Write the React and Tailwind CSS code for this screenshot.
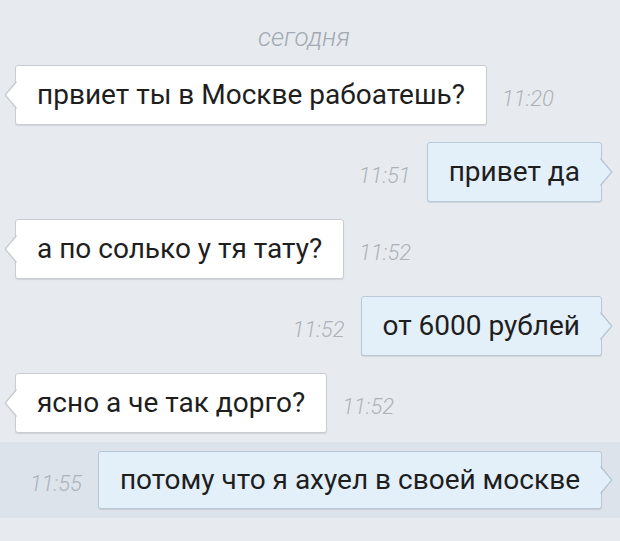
import React from "react";

function TailLeft() {
  return (
    <svg
      className="absolute left-[-12px] top-1/2 -translate-y-1/2"
      width="14"
      height="28"
      viewBox="0 0 14 28"
    >
      <path d="M13.5,0 L1,14 L13.5,28 Z" fill="#ffffff" />
      <path d="M12.5,0.5 L1.2,14 L12.5,27.5" fill="none" stroke="#c3c8ce" strokeWidth="1.2" />
    </svg>
  );
}

function TailRight() {
  return (
    <svg
      className="absolute right-[-12px] top-1/2 -translate-y-1/2"
      width="14"
      height="28"
      viewBox="0 0 14 28"
    >
      <path d="M0.5,0 L13,14 L0.5,28 Z" fill="#e3f0fa" />
      <path d="M1.5,0.5 L12.8,14 L1.5,27.5" fill="none" stroke="#b4c4d3" strokeWidth="1.2" />
    </svg>
  );
}

function Time({ children }) {
  return (
    <span className="mt-[8px] text-[22px] italic font-light text-[#adb2b9] leading-none">
      {children}
    </span>
  );
}

function In({ text, time }) {
  return (
    <div className="flex items-center gap-[15px] pl-[15px]">
      <div className="relative h-[60px] flex items-center px-[21px] bg-white border border-[#c9cdd2] rounded-[3px] shadow-[0_1px_1px_rgba(0,0,0,0.10)]">
        <TailLeft />
        <span className="text-[28px] text-[#1e1e1e] leading-none whitespace-nowrap">{text}</span>
      </div>
      <Time>{time}</Time>
    </div>
  );
}

function Out({ text, time, h = "h-[60px]" }) {
  return (
    <div className="flex items-center justify-end gap-[16px] pr-[18px]">
      <Time>{time}</Time>
      <div className={`relative ${h} flex items-center px-[21px] bg-[#e3f0fa] border border-[#b9c8d6] rounded-[3px] shadow-[0_1px_1px_rgba(0,0,0,0.10)]`}>
        <TailRight />
        <span className="text-[28px] text-[#1e1e1e] leading-none whitespace-nowrap">{text}</span>
      </div>
    </div>
  );
}

export default function App() {
  return (
    <div
      className="w-[620px] h-[541px] overflow-hidden bg-[#e7ebef] flex flex-col pt-[25px]"
      style={{ fontFamily: "Roboto, 'Noto Sans', sans-serif" }}
    >
      <div className="h-[24px] flex items-center justify-center pr-[12px]">
        <span className="text-[26px] italic font-light text-[#a2aab3] leading-none">сегодня</span>
      </div>
      <div className="flex flex-col gap-[17px] mt-[16px]">
        <In text="првиет ты в Москве рабоатешь?" time="11:20" />
        <Out text="привет да" time="11:51" />
        <In text="а по солько у тя тату?" time="11:52" />
        <Out text="от 6000 рублей" time="11:52" />
        <In text="ясно а че так дорго?" time="11:52" />
      </div>
      <div className="mt-[9px] py-[9px] bg-[#dce3ea]">
        <Out text="потому что я ахуел в своей москве" time="11:55" h="h-[58px]" />
      </div>
    </div>
  );
}
